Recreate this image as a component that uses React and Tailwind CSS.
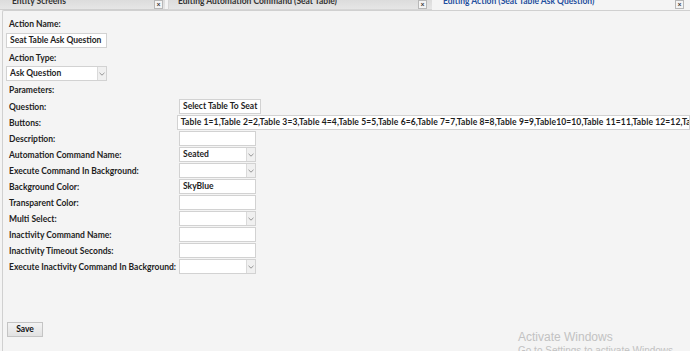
import React from "react";

const font = "font-['Lato','Liberation_Sans',sans-serif]";

function Chevron() {
  return (
    <svg width="6" height="4" viewBox="0 0 6 4" className="block">
      <polyline points="0.5,0.8 3,3.2 5.5,0.8" fill="none" stroke="#8a8a8a" strokeWidth="0.9" />
    </svg>
  );
}

function TextBox({ value = "", className = "w-[77px]" }) {
  return (
    <div className={`h-[15px] ${className} bg-white border border-[#d2d2d2] flex items-center px-[3px] overflow-hidden whitespace-nowrap font-bold text-[8.5px] text-[#1e1e1e]`}>
      {value}
    </div>
  );
}

function SelectBox({ value = "", className = "w-[77px]" }) {
  return (
    <div className={`h-[15px] ${className} bg-white border border-[#d2d2d2] flex items-stretch overflow-hidden`}>
      <div className="flex-1 flex items-center px-[3px] font-bold text-[8.5px] text-[#1e1e1e] whitespace-nowrap">{value}</div>
      <div className="w-[9px] border-l border-[#dadada] bg-[#f0f0f0] flex items-center justify-center">
        <Chevron />
      </div>
    </div>
  );
}

function CloseBox() {
  return (
    <div className="w-[9px] h-[9px] border border-[#b8b8b8] bg-[#f4f4f4] flex items-center justify-center text-[7px] leading-none font-bold text-[#333] -mt-[1px]">
      ×
    </div>
  );
}

const buttonsText =
  "Table 1=1,Table 2=2,Table 3=3,Table 4=4,Table 5=5,Table 6=6,Table 7=7,Table 8=8,Table 9=9,Table10=10,Table 11=11,Table 12=12,Table 13=13,Table 14=14";

const rows = [
  ["Question:", <TextBox value="Select Table To Seat" className="w-[82px]" />],
  ["Buttons:", <TextBox value={buttonsText} className="w-[520px] tracking-[0.12px]" />],
  ["Description:", <TextBox />],
  ["Automation Command Name:", <SelectBox value="Seated" />],
  ["Execute Command In Background:", <SelectBox />],
  ["Background Color:", <TextBox value="SkyBlue" />],
  ["Transparent Color:", <TextBox />],
  ["Multi Select:", <SelectBox />],
  ["Inactivity Command Name:", <TextBox />],
  ["Inactivity Timeout Seconds:", <TextBox />],
  ["Execute Inactivity Command In Background:", <SelectBox />],
];

export default function App() {
  return (
    <div className={`${font} relative w-[690px] h-[351px] overflow-hidden bg-[#f4f4f4] flex flex-col`}>
      {/* tab strip */}
      <div className="h-[10px] flex items-stretch shrink-0">
        <div className="w-[165px] bg-gradient-to-b from-[#dcdcdc] to-[#e6e6e6] border-b border-[#cfcfcf] flex items-center justify-between pl-[12px] pr-[2px] overflow-hidden">
          <span className="font-bold text-[8.5px] text-[#333] leading-none -mt-[7px]">Entity Screens</span>
          <CloseBox />
        </div>
        <div className="w-[3px] border-b border-[#cfcfcf]" />
        <div className="w-[264px] bg-gradient-to-b from-[#dcdcdc] to-[#e6e6e6] border-b border-[#cfcfcf] border-l border-[#d6d6d6] flex items-center justify-between pl-[9px] pr-[5px] overflow-hidden">
          <span className="font-bold text-[8.5px] text-[#333] leading-none -mt-[7px]">Editing Automation Command (Seat Table)</span>
          <CloseBox />
        </div>
        <div className="flex-1 flex items-center justify-between pl-[11px] pr-[6px] overflow-hidden">
          <span className="font-bold text-[8.5px] text-[#1f4f9e] leading-none -mt-[7px]">Editing Action (Seat Table Ask Question)</span>
          <CloseBox />
        </div>
      </div>

      {/* content */}
      <div className="flex-1 ml-[2px] border-l border-t border-[#d0d0d0] rounded-tl-[2px] flex flex-col pl-[3px] pb-[14px]">
        <div className="flex flex-col font-bold text-[8.5px] text-[#1e1e1e]">
          <div className="h-[14px] mt-[6px] flex items-center pl-[3px]">Action Name:</div>
          <div className="mt-[2px]">
            <TextBox value="Seat Table Ask Question" className="w-[101px]" />
          </div>
          <div className="h-[14px] mt-[3px] flex items-center pl-[3px]">Action Type:</div>
          <div className="mt-[1px]">
            <SelectBox value="Ask Question" className="w-[101px]" />
          </div>
          <div className="h-[14px] mt-[2px] flex items-center pl-[3px]">Parameters:</div>
          <div className="mt-[2px] flex flex-col gap-[1px]">
            {rows.map(([label, control], i) => (
              <div key={i} className="flex items-center h-[15px]">
                <div className="w-[173px] pl-[3px] pt-[2px] whitespace-nowrap">{label}</div>
                {control}
              </div>
            ))}
          </div>
        </div>

        <div className="mt-auto">
          <div className="w-[36px] h-[15px] border border-[#c4c4c4] bg-gradient-to-b from-[#f3f3f3] to-[#e2e2e2] flex items-center justify-center font-bold text-[8.5px] text-[#111] ml-[1px]">
            Save
          </div>
        </div>
      </div>

      {/* Windows activation watermark */}
      <div className="absolute left-[518px] top-[330px] font-['Liberation_Sans',sans-serif] text-[#c2c2c2] pointer-events-none">
        <div className="text-[12px] leading-[14px]">Activate Windows</div>
        <div className="text-[10px] leading-[14px]">Go to Settings to activate Windows.</div>
      </div>
    </div>
  );
}
